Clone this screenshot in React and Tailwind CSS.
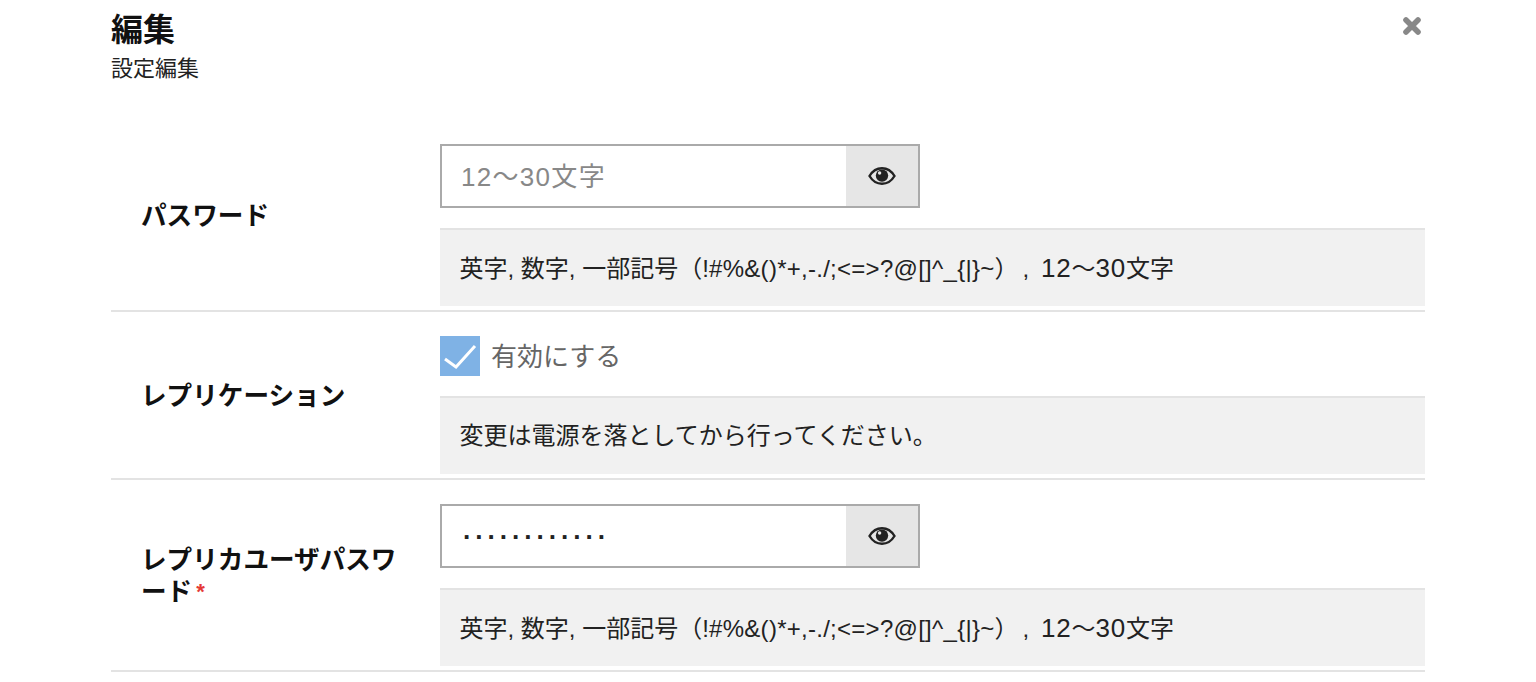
const FONT = { fontFamily: '"Liberation Sans", "Noto Sans CJK JP", sans-serif' };

function Help({ children }) {
  return (
    <div className="mt-5 flex h-[78px] items-center border-t-2 border-[#e3e3e3] bg-[#f1f1f1] pl-[19.5px] pr-5 text-2xl text-[#222]">
      <div>{children}</div>
    </div>
  );
}

function PasswordHelp() {
  return (
    <Help>
      英字, 数字, 一部記号（
      <span className="tracking-[0.27px]">!#%&()*+,-./;&lt;=&gt;?@[]^_{"{|}"}~</span>）
      <span className="ml-[4px] mr-[5px]">,</span> <span className="text-[26px] tracking-[0.8px]">12</span>〜
      <span className="text-[26px] tracking-[0.8px]">30</span>文字
    </Help>
  );
}

function EyeIcon() {
  return (
    <svg viewBox="0 0 28 20" className="h-5 w-7">
      <path
        d="M1.5 10C4.5 5 9 2.2 14 2.2S23.5 5 26.5 10C23.5 15 19 17.8 14 17.8S4.5 15 1.5 10Z"
        fill="none"
        stroke="#222"
        strokeWidth="2.4"
      />
      <circle cx="14" cy="9.6" r="6.2" fill="#222" />
      <circle cx="11.6" cy="7" r="1.7" fill="#e6e6e6" />
    </svg>
  );
}

function PasswordField({ placeholder, value }) {
  return (
    <div className="flex h-16 w-[480px] border-2 border-[#aaaaaa]">
      <input
        readOnly
        type="text"
        placeholder={placeholder}
        value={value}
        className={`min-w-0 flex-1 bg-white pr-[19px] pt-[3px] text-[26px] text-[#222] outline-none placeholder:tracking-[1.3px] placeholder:text-[#888] ${value ? "pl-[21px] font-bold tracking-[3.6px]" : "pl-[19px]"}`}
      />
      <button className="flex w-[72px] items-center justify-center bg-[#e6e6e6]">
        <EyeIcon />
      </button>
    </div>
  );
}

function Row({ label, children }) {
  return (
    <div className="flex border-b-2 border-[#e3e3e3] pb-1 pt-6">
      <div className="flex w-[329px] items-center pb-[17px] pl-[30px] pr-7 text-[25.6px] font-bold leading-[31px] text-[#111]">
        <div>{label}</div>
      </div>
      <div className="flex-1">{children}</div>
    </div>
  );
}

export default function App() {
  return (
    <div className="min-h-[682px] bg-white" style={FONT}>
      <div className="ml-[111px] w-[1314px]">
        <div className="flex h-[120px] items-start justify-between">
          <div>
            <h1 className="pt-[10px] text-[32px] font-bold leading-10 text-[#111]">編集</h1>
            <p className="mt-[1px] text-[22px] leading-9 text-[#222]">設定編集</p>
          </div>
          <svg viewBox="0 0 20 20" className="mr-[3px] mt-[16px] h-5 w-5" fill="none" stroke="#888888" strokeWidth="5.6" strokeLinecap="round">
            <path d="M4 4l12 12M16 4L4 16" />
          </svg>
        </div>

        <Row label="パスワード">
          <PasswordField placeholder="12〜30文字" />
          <PasswordHelp />
        </Row>

        <Row label="レプリケーション">
          <label className="flex h-10 items-center gap-3 pt-[2px] text-[26px] text-[#666]">
            <span className="-mt-[2px] flex h-10 w-10 items-center justify-center bg-[#7fb2e5]">
              <svg viewBox="0 0 40 40" className="h-10 w-10" fill="none" stroke="white" strokeWidth="3">
                <path d="M5 23l11 8L35 10" />
              </svg>
            </span>
            <span className="-ml-[1px]">有効にする</span>
          </label>
          <Help>変更は電源を落としてから行ってください。</Help>
        </Row>

        <Row
          label={
            <>
              レプリカユーザパスワ
              <br />
              ード<span className="ml-1 align-[2px] text-[22px] text-[#e53935]">*</span>
            </>
          }
        >
          <PasswordField value="············" />
          <PasswordHelp />
        </Row>
      </div>
    </div>
  );
}
